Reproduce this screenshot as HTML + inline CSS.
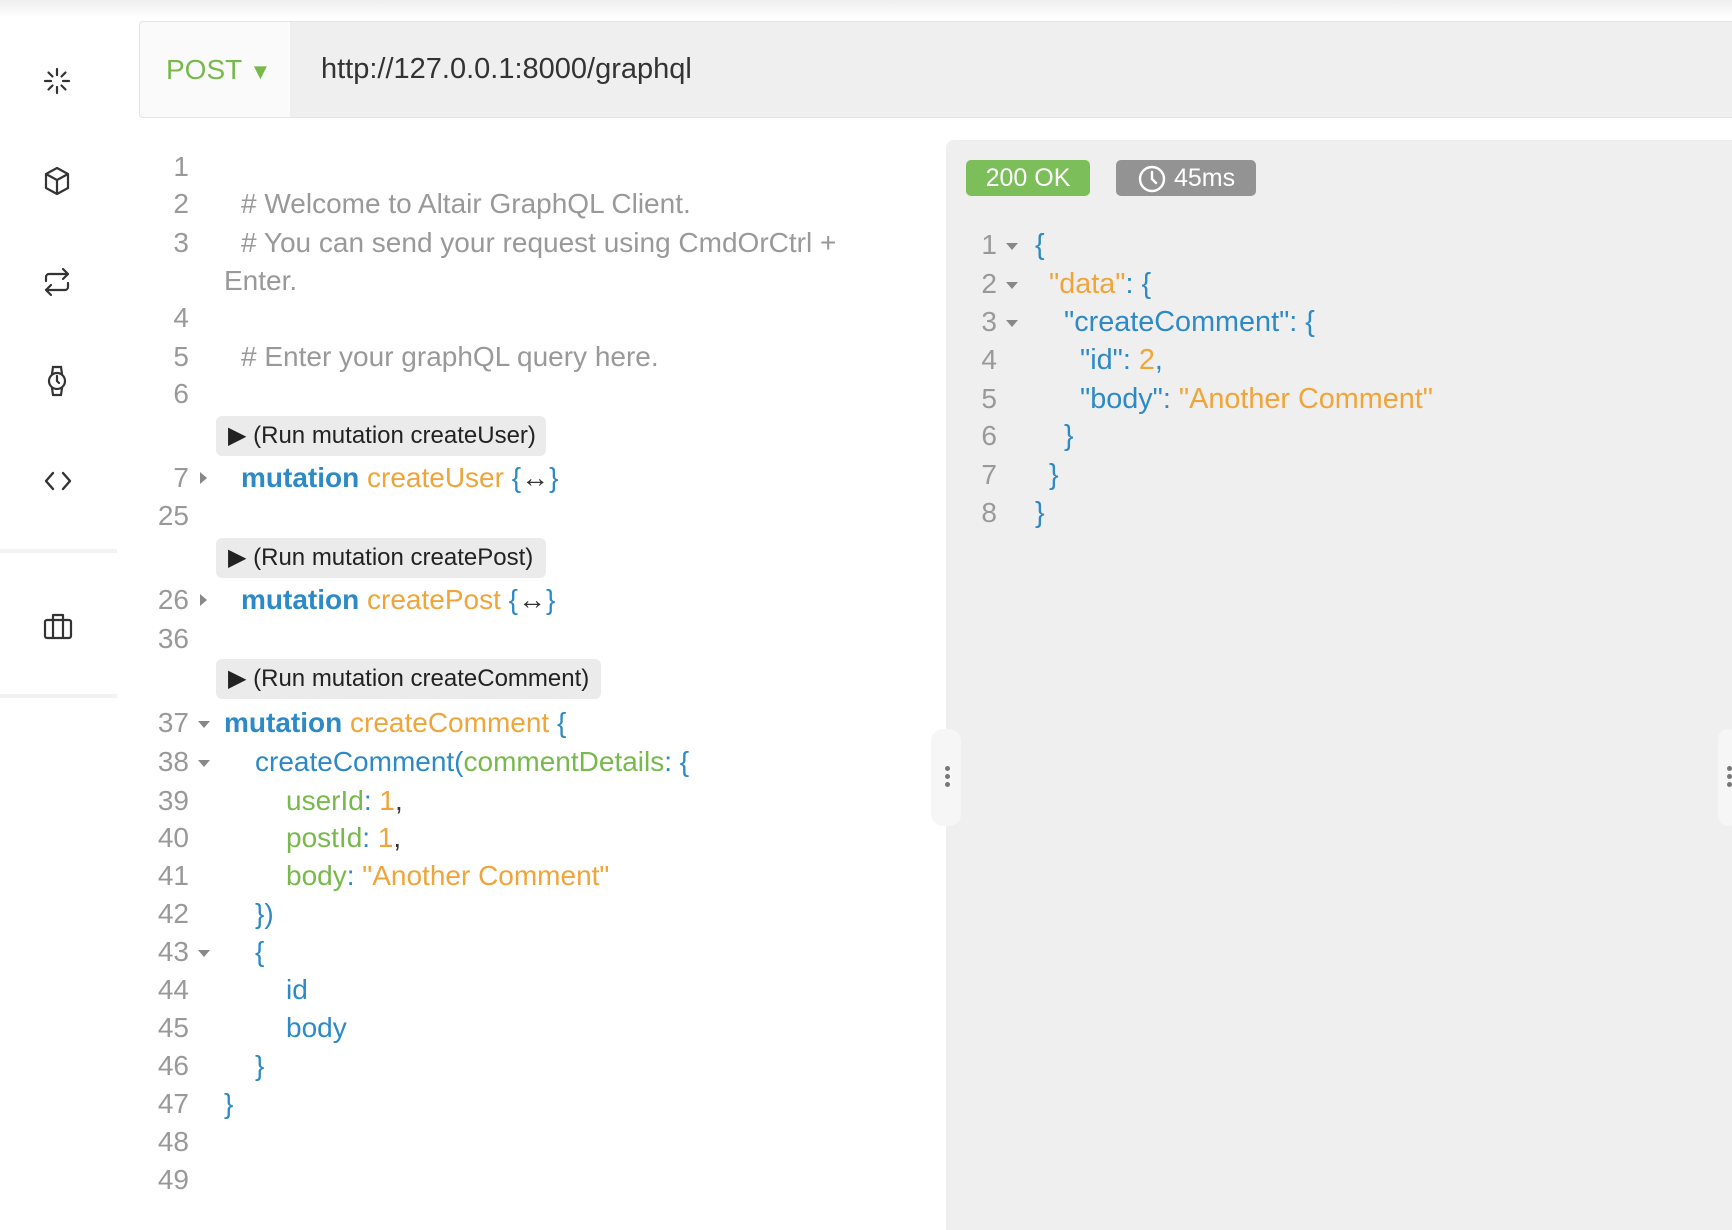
<!DOCTYPE html>
<html><head><meta charset="utf-8"><style>
*{margin:0;padding:0;box-sizing:border-box}
body{width:1732px;height:1222px;background:#fff;position:relative;overflow:hidden;font-family:"Liberation Sans",Arial,sans-serif}
.topsh{position:absolute;left:0;top:0;width:1732px;height:18px;background:linear-gradient(#eee,#fff)}
.bar{position:absolute;left:139px;top:21px;width:1600px;height:97px;border:1px solid #e4e4e4;border-radius:4px;background:#efefef;overflow:hidden}
.post{position:absolute;left:0;top:0;width:150px;height:97px;background:#fafafa;color:#78b94c;font-size:28px;line-height:95px;padding-left:26px}
.url{position:absolute;left:181px;top:0;line-height:95px;font-size:29px;color:#333}
.l,.n,.r{position:absolute;height:38px;line-height:38px;font-size:28px;white-space:pre}
.n{width:60px;left:129px;text-align:right;color:#999}
.rn{width:40px;left:957px;text-align:right;color:#999}
.rr{font-size:28.8px}
.c{color:#999}.b{color:#2d8ac6}.bb{color:#2d8ac6;font-weight:bold}.o{color:#f0a53a}.g{color:#78b94c}.k{color:#333}
.run{position:absolute;left:216px;height:40px;background:#ebebeb;border-radius:6px;font-size:24px;line-height:40px;padding-left:12px;color:#222}
.tri{position:absolute;width:0;height:0}
.td{border-left:6px solid transparent;border-right:6px solid transparent;border-top:7px solid #888}
.tr{border-top:6px solid transparent;border-bottom:6px solid transparent;border-left:7px solid #888}
.side svg{position:absolute}
.hr{position:absolute;left:0;width:117px;height:4px;background:#f3f3f3}
.rp{position:absolute;left:946px;top:140px;width:800px;height:1090px;background:#efefef;border-top-left-radius:8px}
.badge{position:absolute;top:160px;height:36px;border-radius:5px;color:#fff;font-size:25px;line-height:36px}
</style></head><body>
<div class="topsh"></div>
<div class="bar"><div class="post">POST <span style="font-size:22px">▼</span></div><div class="url">http://127.0.0.1:8000/graphql</div></div>

<div class="side">
<svg style="left:43px;top:67px" width="28" height="28" viewBox="0 0 28 28" stroke="#333" stroke-width="2.2" stroke-linecap="round"><path d="M14 2v6M14 20v6M2 14h6M20 14h6M5.5 5.5l4 4M18.5 18.5l4 4M22.5 5.5l-4 4M9.5 18.5l-4 4"/></svg>
<svg style="left:43px;top:166px" width="28" height="30" viewBox="0 0 28 30" fill="none" stroke="#333" stroke-width="2.2" stroke-linejoin="round"><path d="M14 2L25 8v14L14 28 3 22V8z M3 8l11 6 11-6 M14 14v14"/></svg>
<svg style="left:43px;top:266px" width="28" height="32" viewBox="0 0 28 32" fill="none" stroke="#333" stroke-width="2.2" stroke-linecap="round" stroke-linejoin="round"><path d="M3 15v-4a3 3 0 0 1 3-3h19M20 3l5 5-5 5M25 17v4a3 3 0 0 1-3 3H3M8 29l-5-5 5-5"/></svg>
<svg style="left:45px;top:364px" width="24" height="34" viewBox="0 0 24 34" fill="none" stroke="#333" stroke-width="2.2" stroke-linecap="round"><circle cx="12" cy="17" r="8"/><path d="M12 12v5l2 2M7 10l1-7h8l1 7M7 24l1 7h8l1-7"/></svg>
<svg style="left:43px;top:469px" width="30" height="24" viewBox="0 0 30 24" fill="none" stroke="#333" stroke-width="2.4" stroke-linecap="round" stroke-linejoin="round"><path d="M10 4L3 12l7 8M20 4l7 8-7 8"/></svg>
<svg style="left:43px;top:611px" width="30" height="30" viewBox="0 0 30 30" fill="none" stroke="#333" stroke-width="2.2" stroke-linejoin="round"><rect x="2" y="9" width="26" height="18" rx="2"/><path d="M10 9V4h10v5M10 9v18M20 9v18"/></svg>
</div>
<div class="hr" style="top:549px"></div>
<div class="hr" style="top:694px"></div>

<!-- left editor -->
<div class="n" style="top:148px">1</div>
<div class="n" style="top:185px">2</div><div class="l c" style="left:241px;top:185px"># Welcome to Altair GraphQL Client.</div>
<div class="n" style="top:224px">3</div><div class="l c" style="left:241px;top:224px"># You can send your request using CmdOrCtrl +</div>
<div class="l c" style="left:224px;top:262px">Enter.</div>
<div class="n" style="top:299px">4</div>
<div class="n" style="top:338px">5</div><div class="l c" style="left:241px;top:338px"># Enter your graphQL query here.</div>
<div class="n" style="top:375px">6</div>
<div class="run" style="top:416px;width:330px">▶ (Run mutation createUser)</div>
<div class="n" style="top:459px">7</div><div class="tri tr" style="left:200px;top:472px"></div><div class="l" style="left:241px;top:459px"><span class="bb">mutation</span> <span class="o">createUser</span> <span class="b">{</span><span class="k">↔</span><span class="b">}</span></div>
<div class="n" style="top:497px">25</div>
<div class="run" style="top:538px;width:330px">▶ (Run mutation createPost)</div>
<div class="n" style="top:581px">26</div><div class="tri tr" style="left:200px;top:594px"></div><div class="l" style="left:241px;top:581px"><span class="bb">mutation</span> <span class="o">createPost</span> <span class="b">{</span><span class="k">↔</span><span class="b">}</span></div>
<div class="n" style="top:620px">36</div>
<div class="run" style="top:659px;width:385px">▶ (Run mutation createComment)</div>
<div class="n" style="top:704px">37</div><div class="tri td" style="left:198px;top:721px"></div><div class="l" style="left:224px;top:704px"><span class="bb">mutation</span> <span class="o">createComment</span> <span class="b">{</span></div>
<div class="n" style="top:743px">38</div><div class="tri td" style="left:198px;top:760px"></div><div class="l" style="left:255px;top:743px"><span class="b">createComment(</span><span class="g">commentDetails</span><span class="b">: {</span></div>
<div class="n" style="top:782px">39</div><div class="l" style="left:286px;top:782px"><span class="g">userId</span><span class="b">: </span><span class="o">1</span><span class="k">,</span></div>
<div class="n" style="top:819px">40</div><div class="l" style="left:286px;top:819px"><span class="g">postId</span><span class="b">: </span><span class="o">1</span><span class="k">,</span></div>
<div class="n" style="top:857px">41</div><div class="l" style="left:286px;top:857px"><span class="g">body</span><span class="b">: </span><span class="o">"Another Comment"</span></div>
<div class="n" style="top:895px">42</div><div class="l b" style="left:255px;top:895px">})</div>
<div class="n" style="top:933px">43</div><div class="tri td" style="left:198px;top:950px"></div><div class="l b" style="left:255px;top:933px">{</div>
<div class="n" style="top:971px">44</div><div class="l b" style="left:286px;top:971px">id</div>
<div class="n" style="top:1009px">45</div><div class="l b" style="left:286px;top:1009px">body</div>
<div class="n" style="top:1047px">46</div><div class="l b" style="left:255px;top:1047px">}</div>
<div class="n" style="top:1085px">47</div><div class="l b" style="left:224px;top:1085px">}</div>
<div class="n" style="top:1123px">48</div>
<div class="n" style="top:1161px">49</div>

<!-- right panel -->
<div class="rp"></div>
<!-- divider handle -->
<div style="position:absolute;left:931px;top:729px;width:30px;height:97px;border-radius:12px;background:#f6f6f6"></div>
<div style="position:absolute;left:945px;top:766px;width:5px;height:5px;border-radius:50%;background:#777;box-shadow:0 8px 0 #777,0 16px 0 #777"></div>

<div class="badge" style="left:966px;width:124px;background:#7cbf5a;text-align:center">200 OK</div>
<div class="badge" style="left:1116px;width:140px;background:#939393;padding-left:58px">45ms</div>
<svg style="position:absolute;left:1137px;top:164px" width="30" height="30" viewBox="0 0 30 30" fill="none" stroke="#fff" stroke-width="2.4" stroke-linecap="round"><circle cx="15" cy="15" r="12"/><path d="M15 8v7l4 4"/></svg>

<div class="n rn" style="top:226px">1</div><div class="tri td" style="left:1006px;top:243px"></div><div class="l rr b" style="left:1035px;top:226px">{</div>
<div class="n rn" style="top:265px">2</div><div class="tri td" style="left:1006px;top:282px"></div><div class="l rr" style="left:1049px;top:265px"><span class="o">"data"</span><span class="b">: {</span></div>
<div class="n rn" style="top:303px">3</div><div class="tri td" style="left:1006px;top:320px"></div><div class="l rr b" style="left:1064px;top:303px">"createComment": {</div>
<div class="n rn" style="top:341px">4</div><div class="l rr" style="left:1080px;top:341px"><span class="b">"id": </span><span class="o">2</span><span class="b">,</span></div>
<div class="n rn" style="top:380px">5</div><div class="l rr" style="left:1080px;top:380px"><span class="b">"body": </span><span class="o">"Another Comment"</span></div>
<div class="n rn" style="top:417px">6</div><div class="l rr b" style="left:1064px;top:417px">}</div>
<div class="n rn" style="top:456px">7</div><div class="l rr b" style="left:1049px;top:456px">}</div>
<div class="n rn" style="top:494px">8</div><div class="l rr b" style="left:1035px;top:494px">}</div>

<div style="position:absolute;left:1718px;top:729px;width:20px;height:97px;border-radius:12px;background:#f6f6f6"></div>
<div style="position:absolute;left:1727px;top:766px;width:5px;height:5px;border-radius:50%;background:#777;box-shadow:0 8px 0 #777,0 16px 0 #777"></div>
</body></html>
